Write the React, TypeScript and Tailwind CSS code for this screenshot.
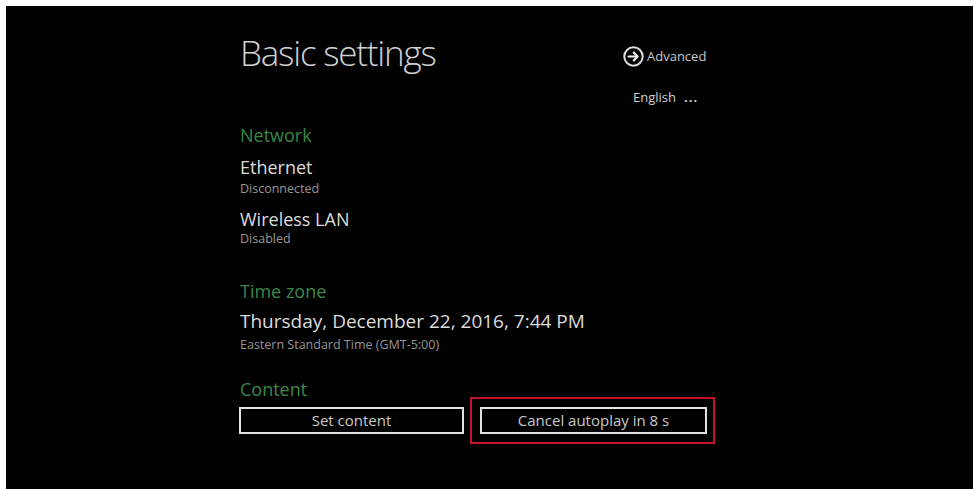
import React from "react";

const font = { fontFamily: '"Open Sans", "Noto Sans", Arial, sans-serif' };

function ArrowCircle() {
  return (
    <svg width="21" height="21" viewBox="0 0 21 21" fill="none">
      <circle cx="10.5" cy="10.5" r="9.2" stroke="#dcdcdc" strokeWidth="2" />
      <path d="M5.5 10.5h8.5" stroke="#f0f0f0" strokeWidth="2.2" strokeLinecap="round" />
      <path d="M10.8 6.6l3.9 3.9-3.9 3.9" stroke="#f0f0f0" strokeWidth="2.2" strokeLinecap="round" strokeLinejoin="round" />
    </svg>
  );
}

function SectionTitle({ children, className = "" }: { children: React.ReactNode; className?: string }) {
  return <div className={`text-[18px] leading-[24px] text-[#3b8749] ${className}`}>{children}</div>;
}

function Item({ title, sub, className = "" }: { title: string; sub: string; className?: string }) {
  return (
    <div className={className}>
      <div className="text-[18px] leading-[24px] text-[#dcdcdc]">{title}</div>
      <div className="mt-[2px] text-[12.5px] leading-[16px] text-[#969696]">{sub}</div>
    </div>
  );
}

export default function App() {
  return (
    <div className="w-[974px] h-[489px] bg-white pt-[6px] pl-[6px] pr-[1px]" style={font}>
      <div className="h-full bg-black pt-[25px] pl-[234px]">
        {/* Header */}
        <div className="flex items-start">
          <h1 className="w-[383px] text-[35px] leading-[44px] font-light tracking-[-1.2px] text-[#d0d0d0]">Basic settings</h1>
          <div className="pt-[14px]">
            <div className="flex items-center h-[22px] gap-[3px]">
              <ArrowCircle />
              <span className="text-[13px] leading-[22px] text-[#c8c8c8]">Advanced</span>
            </div>
            <div className="mt-[21px] pl-[10px] flex items-center gap-[8px] text-[13px] leading-[18px] text-[#d0d0d0]">
              <span>English</span>
              <span className="font-bold tracking-[1px]">...</span>
            </div>
          </div>
        </div>

        {/* Network */}
        <SectionTitle className="mt-[17px]">Network</SectionTitle>
        <Item className="mt-[8px]" title="Ethernet" sub="Disconnected" />
        <div className="mt-[10px]">
          <div className="text-[18px] leading-[24px] text-[#dcdcdc]">Wireless LAN</div>
          <div className="text-[12.5px] leading-[16px] text-[#969696]">Disabled</div>
        </div>

        {/* Time zone */}
        <SectionTitle className="mt-[32px]">Time zone</SectionTitle>
        <div className="mt-[5px] text-[19px] leading-[26px] text-[#dcdcdc]">Thursday, December 22, 2016, 7:44 PM</div>
        <div className="mt-[3px] text-[12.5px] leading-[16px] text-[#969696]">Eastern Standard Time (GMT-5:00)</div>

        {/* Content */}
        <SectionTitle className="mt-[24px] text-[#2f7340]">Content</SectionTitle>
        <div className="mt-[6px] flex items-center gap-[16px] -ml-[1px]">
          <button className="w-[225px] h-[27px] border-2 border-[#e2e2e2] text-[15px] leading-[23px] text-[#c8c8c8]">
            Set content
          </button>
          <div className="relative">
            <button className="w-[227px] h-[27px] border-2 border-[#e2e2e2] text-[15px] leading-[23px] text-[#c8c8c8]">
              Cancel autoplay in 8 s
            </button>
            <div className="absolute -top-[10px] -left-[10px] -right-[8px] -bottom-[10px] border-2 border-[#c4142a] pointer-events-none" />
          </div>
        </div>
      </div>
    </div>
  );
}
